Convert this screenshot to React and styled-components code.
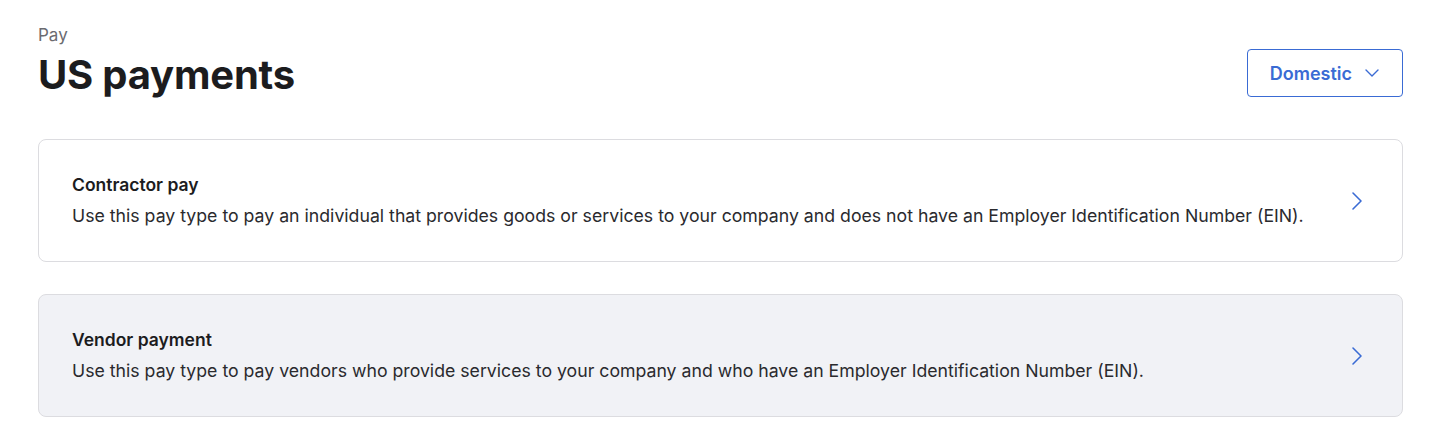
import React from "react";
import styled, { createGlobalStyle } from "styled-components";

const Global = createGlobalStyle`
  html, body { margin: 0; padding: 0; background: #fff; }
  body { font-family: Inter, "Noto Sans", sans-serif; color: #1c1c1e; }
  * { box-sizing: border-box; }
`;

const Page = styled.div`
  padding: 24px 31px 0 38px;
`;

const Header = styled.div`
  display: flex;
  justify-content: space-between;
  align-items: flex-end;
  margin-bottom: 39px;
`;

const TitleBlock = styled.div`
  display: flex;
  flex-direction: column;
`;

const Eyebrow = styled.div`
  font-size: 17px;
  line-height: 22px;
  color: #6b6b70;
`;

const Title = styled.h1`
  margin: 4px 0 0;
  font-size: 40px;
  line-height: 50px;
  font-weight: 700;
  letter-spacing: -0.2px;
  color: #1c1c1e;
`;

const Select = styled.button`
  display: flex;
  align-items: center;
  gap: 13px;
  height: 48px;
  padding: 0 23px 0 22px;
  margin-bottom: 3px;
  border: 1px solid #3a6bd4;
  border-radius: 4px;
  background: #fff;
  color: #3a6bd4;
  font-family: inherit;
  font-size: 18px;
  font-weight: 600;
  cursor: pointer;
`;

const List = styled.div`
  display: flex;
  flex-direction: column;
  gap: 32px;
`;

const Card = styled.div`
  display: flex;
  align-items: center;
  justify-content: space-between;
  height: 123px;
  padding: 0 39px 0 33px;
  border: 1px solid #dcdce0;
  border-radius: 8px;
  background: ${(p) => (p.$active ? "#f1f2f6" : "#fff")};
  cursor: pointer;
`;

const CardText = styled.div`
  display: flex;
  flex-direction: column;
  gap: 8px;
`;

const CardTitle = styled.div`
  font-size: 17.5px;
  line-height: 22px;
  font-weight: 600;
  color: #1c1c1e;
`;

const CardDesc = styled.div`
  font-size: 17.7px;
  line-height: 24px;
  color: #2a2a2e;
`;

const Chevron = ({ dir = "right" }) =>
  dir === "right" ? (
    <svg width="12" height="20" viewBox="0 0 12 20" fill="none">
      <path d="M2 2l8 8-8 8" stroke="#3a6bd4" strokeWidth="1.6" strokeLinecap="round" strokeLinejoin="round" />
    </svg>
  ) : (
    <svg width="14" height="8" viewBox="0 0 14 8" fill="none">
      <path d="M1 1l6 6 6-6" stroke="#3a6bd4" strokeWidth="1.4" strokeLinecap="round" strokeLinejoin="round" />
    </svg>
  );

const items = [
  {
    title: "Contractor pay",
    desc: "Use this pay type to pay an individual that provides goods or services to your company and does not have an Employer Identification Number (EIN).",
  },
  {
    title: "Vendor payment",
    desc: "Use this pay type to pay vendors who provide services to your company and who have an Employer Identification Number (EIN).",
    active: true,
  },
];

export default function App() {
  return (
    <>
      <Global />
      <Page>
        <Header>
          <TitleBlock>
            <Eyebrow>Pay</Eyebrow>
            <Title>US payments</Title>
          </TitleBlock>
          <Select>
            Domestic
            <Chevron dir="down" />
          </Select>
        </Header>
        <List>
          {items.map((it) => (
            <Card key={it.title} $active={it.active}>
              <CardText>
                <CardTitle>{it.title}</CardTitle>
                <CardDesc>{it.desc}</CardDesc>
              </CardText>
              <Chevron />
            </Card>
          ))}
        </List>
      </Page>
    </>
  );
}
